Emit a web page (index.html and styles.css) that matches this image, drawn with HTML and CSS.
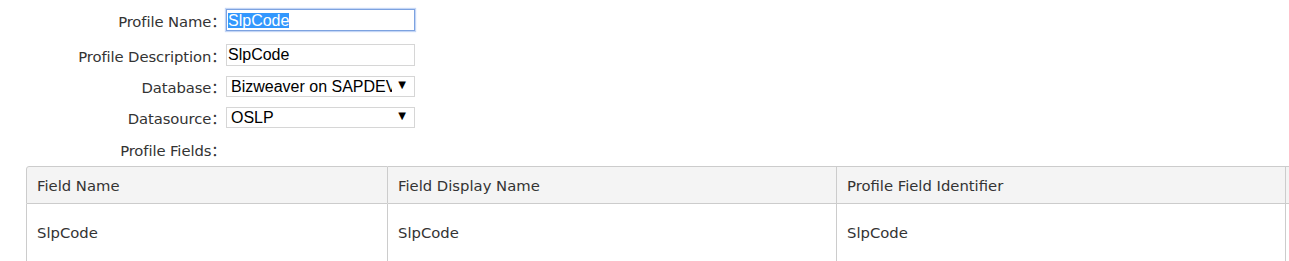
FILE: index.html
```html
<!DOCTYPE html>
<html lang="en">
<head>
  <meta charset="UTF-8">
  <title>Profile</title>
  <link rel="stylesheet" href="styles.css">
</head>
<body>
  <div class="form">
    <div class="row r-name">
      <label class="lbl">Profile Name：</label>
      <div class="field focused"><span class="sel">SlpCode</span></div>
    </div>
    <div class="row r-desc">
      <label class="lbl">Profile Description：</label>
      <input class="field" type="text" value="SlpCode">
    </div>
    <div class="row r-db">
      <label class="lbl">Database：</label>
      <div class="pick">
        <select class="field">
          <option>Bizweaver on SAPDEV</option>
        </select>
        <span class="arrow">▼</span>
      </div>
    </div>
    <div class="row r-ds">
      <label class="lbl">Datasource：</label>
      <div class="pick">
        <select class="field">
          <option>OSLP</option>
        </select>
        <span class="arrow">▼</span>
      </div>
    </div>
    <div class="row r-fields">
      <label class="lbl">Profile Fields：</label>
    </div>
  </div>

  <div class="grid-wrap">
    <table class="grid">
      <thead>
        <tr>
          <th class="c1">Field Name</th>
          <th class="c2">Field Display Name</th>
          <th class="c3">Profile Field Identifier</th>
          <th class="c4"></th>
        </tr>
      </thead>
      <tbody>
        <tr>
          <td>SlpCode</td>
          <td>SlpCode</td>
          <td>SlpCode</td>
          <td></td>
        </tr>
      </tbody>
    </table>
  </div>
</body>
</html>
```

FILE: styles.css
```css
html {
  overflow: hidden;
}
body {
  margin: 0;
  background: #fff;
  color: #333;
  font-family: "DejaVu Sans", Verdana, "Noto Sans CJK SC", sans-serif;
  font-size: 14.8px;
}
.form {
  padding-top: 9px;
}
.row {
  display: flex;
  align-items: center;
}
.r-name { height: 22px; }
.r-desc { height: 22px; margin-top: 13px; }
.r-db { height: 21px; margin-top: 10px; }
.r-ds { height: 21px; margin-top: 10px; }
.r-fields { height: 18px; margin-top: 12px; }
.lbl {
  width: 226px;
  text-align: right;
  white-space: nowrap;
  letter-spacing: -0.1px;
}
.field {
  box-sizing: border-box;
  width: 189px;
  height: 100%;
  margin: 0;
  padding: 0 1px;
  border: 1px solid #d6d6d6;
  background: #fff;
  color: #000;
  font-family: "Liberation Sans", Arial, sans-serif;
  font-size: 16px;
  outline: none;
  display: flex;
  align-items: center;
}
.focused {
  border-color: #7da2e0;
  box-shadow: 0 0 1px 1px #c4d6f5;
}
.sel {
  background: #3297fd;
  color: #fff;
  line-height: 15px;
}
.pick {
  position: relative;
  height: 100%;
}
.pick select {
  appearance: none;
  -webkit-appearance: none;
  padding: 0 22px 0 4px;
  border-radius: 0;
}
.arrow {
  position: absolute;
  right: 9px;
  top: 3px;
  font-family: "DejaVu Sans", sans-serif;
  font-size: 10px;
  color: #000;
  pointer-events: none;
}
.grid-wrap {
  margin: 8px 0 0 26px;
  overflow: hidden;
}
.grid {
  border-collapse: separate;
  border-spacing: 0;
  table-layout: fixed;
  width: 1707px;
}
.grid th,
.grid td {
  text-align: left;
  font-weight: normal;
  padding: 0 10px;
  border-right: 1px solid #ccc;
  border-bottom: 1px solid #ccc;
  white-space: nowrap;
}
.grid th {
  height: 36px;
  background: #f4f4f4;
  border-top: 1px solid #ccc;
}
.grid td {
  height: 57px;
}
.grid th:first-child,
.grid td:first-child {
  border-left: 1px solid #ccc;
}
.grid th:first-child {
  border-top-left-radius: 3px;
}
.c1 { width: 340px; }
.c2 { width: 428px; }
.c3 { width: 428px; }
.c4 { width: 428px; }
```
